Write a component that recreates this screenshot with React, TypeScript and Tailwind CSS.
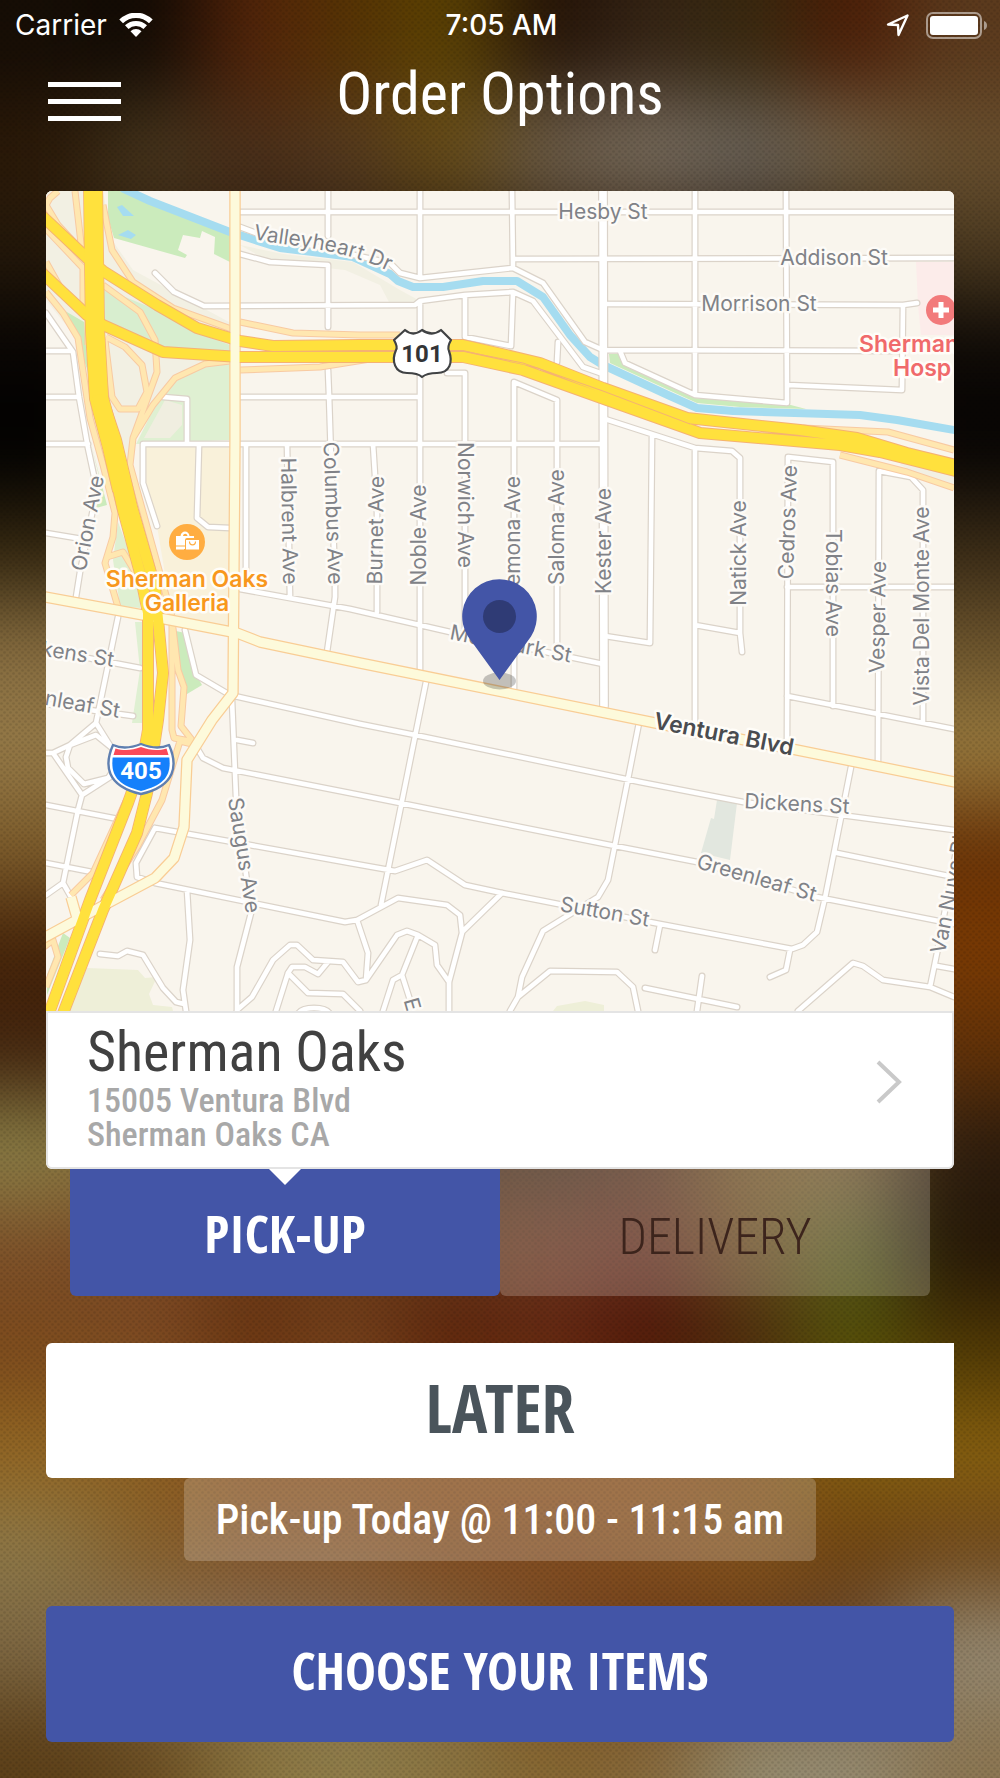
import React, { useState } from 'react';

const NARROW = "font-['Roboto_Condensed','DejaVu_Sans_Condensed',sans-serif]";
const NARROW_CAPS = "font-['Open_Sans_Condensed','Roboto_Condensed',sans-serif]";

// 10 x 18 colour cells of the blurred photo, top to bottom
const PHOTO: string[][] = [
  ['#160d05', '#100903', '#54240a', '#553304', '#5c4303', '#231207', '#352415', '#38290f', '#4c1d06', '#5b3a1d'],
  ['#2c1a08', '#4b3a20', '#4a2f1a', '#573c22', '#6b5018', '#72634f', '#7f7364', '#6c665e', '#766549', '#69502f'],
  ['#24180a', '#302010', '#302010', '#302010', '#302010', '#302010', '#302010', '#302010', '#302010', '#4c3a20'],
  ['#080503', '#100a06', '#201409', '#201409', '#201409', '#201409', '#201409', '#201409', '#100a06', '#0c0805'],
  ['#000000', '#100a06', '#201409', '#201409', '#201409', '#201409', '#201409', '#201409', '#100a06', '#060403'],
  ['#33260f', '#33260f', '#201409', '#201409', '#201409', '#201409', '#201409', '#201409', '#33260f', '#3a2b16'],
  ['#876d40', '#876d40', '#302010', '#302010', '#302010', '#302010', '#302010', '#302010', '#6e562e', '#6e562e'],
  ['#957a48', '#957a48', '#302010', '#302010', '#302010', '#302010', '#302010', '#302010', '#987a3e', '#987a3e'],
  ['#7c5b2a', '#7c5b2a', '#302010', '#302010', '#302010', '#302010', '#302010', '#302010', '#683206', '#683206'],
  ['#452308', '#452308', '#302010', '#302010', '#302010', '#302010', '#302010', '#302010', '#763603', '#7a3a03'],
  ['#42240e', '#42240e', '#302010', '#302010', '#302010', '#302010', '#302010', '#302010', '#5c3a14', '#623208'],
  ['#8c8148', '#8a7038', '#6a4020', '#6a4020', '#4a2c18', '#46301c', '#583822', '#7a5c2c', '#7c5e38', '#2c1c0e'],
  ['#7c4f28', '#7c4a26', '#6c3c1a', '#6c3c1a', '#65381c', '#6c3820', '#662e20', '#6c4c20', '#595c20', '#241606'],
  ['#7c4a1c', '#7d4a22', '#67320f', '#74411c', '#5a2108', '#62240f', '#4a1203', '#46280a', '#525104', '#503904'],
  ['#926622', '#8e6020', '#8c521c', '#8c521c', '#8c521c', '#8c521c', '#8c521c', '#825018', '#846011', '#87600f'],
  ['#8d7848', '#87602c', '#86592e', '#86592e', '#824e22', '#824c20', '#83501f', '#85551e', '#6f4310', '#71491c'],
  ['#7d6743', '#88745a', '#84705a', '#84684e', '#80603e', '#764a26', '#6c3a18', '#683c18', '#644834', '#958a74'],
  ['#5c3f18', '#6a4c20', '#8a743e', '#907f4c', '#8a7440', '#866630', '#86683a', '#958b6e', '#968c72', '#8c7652'],
];

const MINOR_ROADS = [
  'M240 212H954', 'M328 191V236', 'M240 254L270 262L328 265V327',
  'M240 227L256 233L390 263L400 273L420 278L513 268L543 283L585 342L603 350',
  'M155 273L174 292L204 306L415 305L420 301L465 295L513 292L533 301L583 367L603 374',
  'M46 351H72', 'M46 313L73 352L79 397L88 448L97 490L80 572L76 597', 'M46 397H79', 'M46 444H88',
  'M163 397L187 399V444', 'M240 397H420', 'M143 444H603', 'M157 526L143 483V444',
  'M328 370L329 395L335 583V597L327 652', 'M199 444L197 518L208 527L230 528', 'M246 444V590',
  'M240 589L350 609L450 632L603 664', 'M287 444L290 597', 'M373 444L377 507V612',
  'M420 191V278', 'M420 301V672', 'M447 373H465V638', 'M465 297V337L511 346L513 292',
  'M512 191L513 268', 'M513 259L954 258', 'M603 304L903 305L917 303', 'M903 305L902 390L788 385',
  'M603 350L902 351', 'M558 342L557 362', 'M514 690V382L557 400V650', 'M605 419L695 448L732 451L740 458V633L742 652',
  'M652 436L650 643L605 636', 'M695 191V395', 'M786 191L787 403L695 395L625 363L620 351', 'M695 448V735',
  'M695 625L740 633', 'M787 745L788 457L833 462V706', 'M787 587H954', 'M787 696L954 729',
  'M878 762L879 471L911 477L923 490V722',
  'M185 630L196 675L230 695L360 724L415 735L640 782L743 802L954 830',
  'M232 700L236 797L251 913L237 967V1011', 'M237 740L253 743', 'M197 748L203 758L223 768L360 795L400 803L615 846L697 862L817 897L954 924',
  'M155 828L350 863L395 871L427 860L465 885L502 893L660 924L792 949L803 945L817 932L825 898L851 767',
  'M155 828L136 863L137 877L155 883L345 922L357 920L398 898L447 905L460 915L462 933L449 982V1011',
  'M357 920L368 953L366 980L358 982L343 962L313 960L297 945H290L273 960L252 997L237 1010',
  'M366 980L397 935L407 931L418 935L435 945L437 965L449 982', 'M418 935L402 975L410 1000', 'M402 975L393 980L383 1011',
  'M328 962L318 974L305 967H292L288 973L276 1011', 'M288 973L308 993L343 994L360 1011', 'M298 1014C302 1006 326 1006 330 1014',
  'M426 682L381 905', 'M502 893L462 932', 'M639 723L628 779L608 880L598 897L543 931L522 977L518 997L510 1011',
  'M518 997L550 971L617 972L633 987L638 1011', 'M660 925L655 950', 'M645 988L737 1007', 'M702 976L697 1011',
  'M790 950L786 970L770 977', 'M798 1011L853 963L863 966L883 980L930 987L954 997', 'M960 830L937 953L930 987',
  'M937 966L954 969', 'M837 853L954 877', 'M187 890L190 940L183 990L186 1011',
  'M100 954L118 956L127 951L143 955L163 988L176 1002L184 1004', 'M46 805L118 819', 'M46 863L92 872',
  'M110 777L82 795L78 810L63 883L46 895', 'M63 883L71 897', 'M46 753H53L70 745L96 723L118 617', 'M96 723L111 747',
  'M53 753L82 795', 'M46 650L140 668', 'M46 704L133 716', 'M46 533L82 539',
  'M66 757L70 745L96 735L112 748L118 764L108 778L84 784L68 768Z',
];

const RAMPS = [
  'M103 205L112 250L133 282L173 308L237 331', 'M240 322L293 333L360 335H400', 'M75 191L82 252', 'M46 205L50 198L58 191',
  'M46 205L58 225L84 253', 'M46 229L83 268V312', 'M46 262L60 287L88 318V345', 'M46 292L63 313L78 338L90 418L103 465L115 513L113 537L105 563L118 607',
  'M103 285L140 312L155 340L157 372L133 438L130 465L172 617V730L174 738L195 742', 'M106 337L125 347L142 365L147 392L138 409H120L112 397L105 340',
  'M133 438L153 405L175 378L205 364L230 361', 'M240 370L320 367L370 359', 'M107 557L123 552L140 580',
  'M172 620L178 670L184 687L181 726L192 740', 'M192 744L180 741L162 800L137 847L103 900', 'M128 797L93 873L71 895',
  'M44 947L53 940L58 957L46 987', 'M803 428L888 432L954 450', 'M840 455L907 472L954 488',
];

const FREEWAYS = [
  'M40 214L87 258L103 271L157 305L197 328L240 341L273 346L360 345H463L540 363L603 388L687 418L800 430L857 438L907 453L960 466',
  'M40 271L87 315L103 325L163 352L240 357H463L523 370L607 400L700 433L840 445L880 452L960 472',
  'M97 395L107 440L123 510L140 573L148 613V730L142 763L128 803L90 900L48 1016',
  'M101 395L116 440L132 507L155 587L163 673L158 720L147 793L137 833L103 910L62 1016',
];
const FREEWAY_TRUNK = 'M93 185L95 330L99 398L112 447L122 490';

const VENTURA = 'M40 596L170 620L237 633L260 642L360 663L670 726L787 748L960 783';
const SEPULVEDA = 'M235 185V440L233 693L212 720L187 760L184 827L174 858L155 878L95 910L40 940M71 897L77 918';
const RIVER = 'M122 188L150 201L230 232L280 248L353 257L390 274L398 281L413 287H443L483 281L517 281L543 297L570 335L590 357L603 365L670 396L697 408L733 411L860 415L897 420L960 431';

interface MapLabel {
  text: string;
  x: number;
  y: number;
  angle?: number;
  anchor?: 'start' | 'middle' | 'end';
}

const STREETS: MapLabel[] = [
  { text: 'Hesby St', x: 603, y: 211 },
  { text: 'Addison St', x: 834, y: 257 },
  { text: 'Morrison St', x: 759, y: 303 },
  { text: 'Orion Ave', x: 87, y: 523, angle: -79 },
  { text: 'Halbrent Ave', x: 290, y: 521, angle: 89 },
  { text: 'Columbus Ave', x: 334, y: 513, angle: 88 },
  { text: 'Burnet Ave', x: 375, y: 530, angle: -89 },
  { text: 'Noble Ave', x: 418, y: 535, angle: -90 },
  { text: 'Norwich Ave', x: 466, y: 505, angle: 90 },
  { text: 'Lemona Ave', x: 512, y: 537, angle: -90 },
  { text: 'Saloma Ave', x: 556, y: 527, angle: -90 },
  { text: 'Kester Ave', x: 603, y: 541, angle: -90 },
  { text: 'Natick Ave', x: 738, y: 553, angle: -90 },
  { text: 'Cedros Ave', x: 787, y: 522, angle: -88 },
  { text: 'Tobias Ave', x: 834, y: 583, angle: 90 },
  { text: 'Vesper Ave', x: 877, y: 617, angle: -89 },
  { text: 'Vista Del Monte Ave', x: 921, y: 606, angle: -90 },
  { text: 'Dickens St', x: 114, y: 659, angle: 9, anchor: 'end' },
  { text: 'Greenleaf St', x: 120, y: 710, angle: 10, anchor: 'end' },
  { text: 'Moorpark St', x: 511, y: 643, angle: 11 },
  { text: 'Dickens St', x: 797, y: 803, angle: 3 },
  { text: 'Greenleaf St', x: 757, y: 877, angle: 16 },
  { text: 'Sutton St', x: 605, y: 911, angle: 10 },
  { text: 'Saugus Ave', x: 245, y: 855, angle: 81 },
  { text: 'Van Nuys Blvd', x: 937, y: 953, angle: -79, anchor: 'start' },
  { text: 'E', x: 413, y: 1004, angle: 74 },
];

const StreetMap: React.FC = () => (
  <svg
    viewBox="46 191 908 820"
    className="block h-auto w-full bg-[#f9f5ed] font-['Inter','Liberation_Sans',sans-serif]"
    role="img"
    aria-label="Map of Sherman Oaks"
  >
    {/* land areas */}
    <path fill="#f2f0e3" d="M46 191H103L112 240L133 270L240 328V362L175 385L133 440L128 460H100L78 340L46 300Z" />
    <path fill="#f2f0e3" d="M240 245L283 254L353 262L400 290L420 301L390 304L380 285L345 270L270 262ZM910 447L954 460V490L900 465Z" />
    <path fill="#cbebbc" d="M108 191H120L230 234V262L214 254L215 237L202 231L200 238L183 235L178 250L187 255L185 258L114 238L108 218Z" />
    <path fill="#a5dcf0" d="M117 207L122 205L134 216L123 216ZM118 235L128 230L136 235L131 239Z" />
    <path fill="#d8eecf" d="M103 288L157 310L197 333L230 345V356L163 350L103 322Z" />
    <path fill="#dff0d2" d="M175 382L205 366L230 362V440L136 444L153 410Z" />
    <path fill="#f0eee0" d="M165 400L182 405V425L170 438L144 438Z" />
    <path fill="#cbebbc" d="M60 308L84 322L88 372L78 342ZM90 440L107 505L96 508L100 480Z" />
    <path fill="#dff0d2" d="M118 522L140 580V608L120 606L113 560ZM135 622H144V723H132L140 670Z" />
    <path fill="#cbebbc" d="M176 631L185 633L195 673L202 685L187 694L178 668ZM63 933L70 938L47 995V975Z" />
    <path fill="#f9f1da" d="M145 446H229V628L172 616L157 526L145 483Z" />
    <path fill="#eeefd8" d="M87 968L138 970L145 978L157 977L149 994L153 1005L172 1007L173 1011H68ZM553 1011L557 1006L585 1001L604 1005V1011Z" />
    <path fill="#e2e7df" d="M717 800L737 803L730 860L701 853L711 818L714 819Z" />
    <path fill="#fcecea" d="M916 262H954V335H921L918 305Z" />

    <path d={RIVER} fill="none" stroke="#a5dcf0" strokeWidth="8" strokeLinejoin="round" />
    <path fill="#cbebbc" d="M609 354H618L625 366L695 398L787 404L806 409L740 407L697 403L610 363Z" />

    {/* minor roads, casing under fill */}
    <g fill="none" strokeLinecap="round" strokeLinejoin="round">
      <path d={MINOR_ROADS.join('')} stroke="#dbd3c9" strokeWidth="7" />
      <path d="M603 185L604 706" stroke="#dbd3c9" strokeWidth="10" />
      <path d={MINOR_ROADS.join('')} stroke="#ffffff" strokeWidth="4.6" />
      <path d="M603 185L604 706" stroke="#ffffff" strokeWidth="7.6" />
    </g>

    <g fill="none" strokeLinejoin="round">
      <path d={RAMPS.join('')} stroke="#f8caa2" strokeWidth="7" />
      <path d={RAMPS.join('')} stroke="#ffe7b0" strokeWidth="5" />
      <path d={VENTURA + SEPULVEDA} stroke="#f9cd95" strokeWidth="11.5" />
      <path d={FREEWAYS.join('')} stroke="#f5b272" strokeWidth="12" />
      <path d={FREEWAY_TRUNK} stroke="#f5b272" strokeWidth="20" />
      <path d={FREEWAYS.join('')} stroke="#ffe13d" strokeWidth="10" />
      <path d={FREEWAY_TRUNK} stroke="#ffe13d" strokeWidth="18.4" />
      <path d={VENTURA} stroke="#fdfadb" strokeWidth="9" />
      <path d={SEPULVEDA} stroke="#fdfadb" strokeWidth="9" />
      <path d={FREEWAYS.slice(2).join('')} stroke="#ffe13d" strokeWidth="10" />
      <path d="M463 351L523 363L603 391L690 424" stroke="#f5b272" strokeWidth="1" />
    </g>

    {/* street names */}
    <g fill="#808287" stroke="#fdfbf7" strokeWidth="5" strokeLinejoin="round" className="text-[21px] [paint-order:stroke]">
      {STREETS.map((s) => (
        <text
          key={`${s.text}-${s.x}`}
          transform={`translate(${s.x} ${s.y}) rotate(${s.angle ?? 0})`}
          textAnchor={s.anchor ?? 'middle'}
          y="8"
        >
          {s.text}
        </text>
      ))}
      <path id="valleyheart" d="M253 239C290 247 345 247 398 276" fill="none" stroke="none" />
      <text>
        <textPath href="#valleyheart">Valleyheart Dr</textPath>
      </text>
    </g>
    <g stroke="#fffdf8" strokeWidth="5" strokeLinejoin="round" className="text-[23px] font-semibold [paint-order:stroke]">
      <text transform="translate(724 734) rotate(11)" textAnchor="middle" y="8" fill="#4a4c50">Ventura Blvd</text>
      <text x="187" y="587" textAnchor="middle" fill="#f8981d">Sherman Oaks</text>
      <text x="187" y="611" textAnchor="middle" fill="#f8981d">Galleria</text>
      <text x="859" y="352" fill="#f06a6b">Sherman</text>
      <text x="893" y="376" fill="#f06a6b">Hosp</text>
    </g>

    {/* shopping bags */}
    <circle cx="187" cy="542" r="18" fill="#ffad41" />
    <path fill="#fff" d="M176 536H180.500C181 530 189 530 189.500 536H194V538H187Q185 538 185 540V549H176ZM183 536H187.500C187 533 183.500 533 183 536Z" />
    <path fill="#fff" d="M176 546.500H184V549.500H176ZM186 540H199V549.500H186Z" />
    <path d="M176 546H185M189.500 541.500C189.500 546 195.500 546 195.500 541.500" fill="none" stroke="#ffad41" strokeWidth="1.200" />

    {/* hospital */}
    <circle cx="941" cy="310" r="15" fill="#f27a7b" />
    <path d="M933 310H949M941 302V318" stroke="#fff" strokeWidth="5" />

    {/* US 101 */}
    <path
      d="M405 330Q413 337 422 330Q432 337 441 330L451 340Q447 347 449 351C453 362 450 373 437 373Q427 373 422 377Q418 373 407 373C395 373 391 361 396 350Q398 347 394 340Z"
      fill="#fff"
      stroke="#404244"
      strokeWidth="2.200"
      strokeLinejoin="round"
    />
    <text x="422" y="362" textAnchor="middle" fill="#333436" className="font-['Roboto','Liberation_Sans',sans-serif] text-[24px] font-bold">101</text>

    {/* Interstate 405 */}
    <path
      d="M113 745C122 749 131 748 141 744C151 748 160 749 169 745C178 765 176 786 141 794C106 786 104 765 113 745Z"
      fill="#fff"
      stroke="#5f7fb0"
      strokeWidth="2.400"
      strokeLinejoin="round"
    />
    <path d="M115.500 748.500C124 751 132 750.500 141 747C150 750.500 158 751 166.500 748.500L168.500 755H113.500Z" fill="#fb4a58" />
    <path d="M112.700 757.500H169.300C171.500 776 164 785 141 791C118 785 110.500 776 112.700 757.500Z" fill="#1580fb" />
    <text x="141" y="779" textAnchor="middle" fill="#fff" className="font-['Roboto','Liberation_Sans',sans-serif] text-[24px] font-bold">405</text>

    {/* store pin */}
    <ellipse cx="499.500" cy="681" rx="16.500" ry="8.500" fill="#000" fillOpacity="0.22" />
    <path d="M499.500 680L468 636.500A37.300 37.300 0 1 1 531 636.500Z" fill="#4355a7" />
    <circle cx="499.500" cy="616.500" r="16.500" fill="#2f3b75" />
  </svg>
);

const PhotoBackdrop: React.FC = () => (
  <svg className="absolute inset-0 -z-10 h-full w-full" viewBox="0 0 1000 1778" preserveAspectRatio="none" aria-hidden="true">
    <defs>
      <filter id="soften" x="-20%" y="-20%" width="140%" height="140%" colorInterpolationFilters="sRGB">
        <feGaussianBlur stdDeviation="42" />
      </filter>
      <pattern id="weave" width="6" height="6" patternUnits="userSpaceOnUse">
        <circle cx="1.500" cy="1.500" r="1.300" fill="#000" fillOpacity="0.1" />
        <circle cx="4.500" cy="4.500" r="1.300" fill="#000" fillOpacity="0.1" />
      </pattern>
    </defs>
    <g filter="url(#soften)">
      {PHOTO.map((row, r) =>
        row.map((color, c) => (
          <rect
            key={`${r}-${c}`}
            x={c === 0 ? -150 : c * 100}
            y={r === 0 ? -150 : r * 100}
            width={c === 0 || c === 9 ? 251 : 101}
            height={r === 0 || r === 17 ? 251 : 101}
            fill={color}
          />
        ))
      )}
    </g>
    <rect width="1000" height="1778" fill="url(#weave)" />
  </svg>
);

const StatusBar: React.FC = () => (
  <div className="grid h-[50px] grid-cols-3 items-center pr-3 pl-[15px] font-['Inter','Liberation_Sans',sans-serif] text-[28px] leading-8 text-white">
    <div className="flex items-center gap-3">
      <span>Carrier</span>
      <svg className="h-6 w-[34px]" viewBox="0 0 34 24" fill="#fff" aria-hidden="true">
        <path d="M17 24L11.500 18.200A8 8 0 0 1 22.500 18.200Z" />
        <path d="M9.500 16L6 12.300A16 16 0 0 1 28 12.300L24.500 16A11 11 0 0 0 9.500 16Z" />
        <path d="M4 10.200L0.300 6.400A24 24 0 0 1 33.700 6.400L30 10.200A19 19 0 0 0 4 10.200Z" />
      </svg>
    </div>
    <span className="text-center font-medium">7:05 AM</span>
    <div className="flex items-center justify-end gap-4">
      <svg className="h-[23px] w-6" viewBox="0 0 24 23" aria-hidden="true">
        <path d="M2 10.500L21.500 1.500L12.500 21L12 11Z" fill="none" stroke="#fff" strokeWidth="2.400" strokeLinejoin="round" />
      </svg>
      <svg className="h-[27px] w-[62px]" viewBox="0 0 62 27" aria-hidden="true">
        <rect x="1" y="1" width="54" height="25" rx="6" fill="none" stroke="#fff" strokeOpacity="0.5" strokeWidth="2" />
        <rect x="4" y="4" width="48" height="19" rx="3" fill="#fff" />
        <path d="M58 9C62 10 62 17 58 18Z" fill="#fff" fillOpacity="0.5" />
      </svg>
    </div>
  </div>
);

type OrderMode = 'pickup' | 'delivery';

export default function App() {
  const [mode, setMode] = useState<OrderMode>('pickup');

  const tabStyle = (active: boolean) =>
    active
      ? `bg-[#4355a7] text-[52px] font-bold text-white ${NARROW_CAPS}`
      : 'bg-white/20 pt-2 text-[50px] font-light text-[#3c241c]';

  return (
    <div className={`relative isolate min-h-screen overflow-hidden bg-[#3a2412] pb-9 ${NARROW}`}>
      <PhotoBackdrop />
      <StatusBar />

      <header className="grid h-[141px] grid-cols-[1fr_auto_1fr] items-start px-12 pt-2">
        <button type="button" aria-label="Menu" className="mt-6 flex w-[73px] flex-col gap-3">
          <span className="h-[5px] w-full bg-white" />
          <span className="h-[5px] w-full bg-white" />
          <span className="h-[5px] w-full bg-white" />
        </button>
        <h1 className="text-[60px] leading-[72px] text-white">Order Options</h1>
      </header>

      <main className="px-[46px]">
        <section className="overflow-hidden rounded-md bg-white">
          <StreetMap />
          <a href="#store" className="flex items-center justify-between rounded-b-md border-2 border-[#e4e4e4] pt-2 pb-4 pr-[50px] pl-[39px]">
            <div>
              <h2 className="text-[56px] leading-[62px] text-[#414141]">Sherman Oaks</h2>
              <p className="text-[34px] leading-[34px] font-medium text-[#a8a8a8]">15005 Ventura Blvd</p>
              <p className="text-[34px] leading-[34px] font-medium text-[#a8a8a8]">Sherman Oaks CA</p>
            </div>
            <svg className="mb-2 h-11 w-[26px]" viewBox="0 0 26 44" aria-hidden="true">
              <path d="M2 2L23 22L2 42" fill="none" stroke="#c9c9c9" strokeWidth="4" />
            </svg>
          </a>
        </section>

        <div className="mx-6 grid grid-cols-2">
          <button
            type="button"
            aria-pressed={mode === 'pickup'}
            onClick={() => setMode('pickup')}
            className={`relative h-[127px] rounded-b-md leading-[60px] ${tabStyle(mode === 'pickup')}`}
          >
            {mode === 'pickup' && <Notch />}
            PICK-UP
          </button>
          <button
            type="button"
            aria-pressed={mode === 'delivery'}
            onClick={() => setMode('delivery')}
            className={`relative h-[127px] rounded-b-md leading-[60px] ${tabStyle(mode === 'delivery')}`}
          >
            {mode === 'delivery' && <Notch />}
            DELIVERY
          </button>
        </div>

        <button type="button" className={`mt-[47px] h-[135px] w-full rounded-l-md bg-white pb-2 text-[66px] leading-[72px] font-bold text-[#4a545b] ${NARROW_CAPS}`}>
          LATER
        </button>
        <p className="mx-auto flex h-[83px] w-fit items-center rounded-md bg-white/20 px-8 text-[42px] leading-[48px] font-medium text-white">
          Pick-up Today @ 11:00 - 11:15 am
        </p>
        <button type="button" className={`mt-[45px] h-[136px] w-full rounded-md bg-[#4355a7] pb-2 text-[52px] leading-[60px] font-bold text-white ${NARROW_CAPS}`}>
          CHOOSE YOUR ITEMS
        </button>
      </main>
    </div>
  );
}

function Notch() {
  return (
    <svg className="absolute top-0 left-1/2 h-4 w-8 -translate-x-1/2" viewBox="0 0 32 16" aria-hidden="true">
      <path d="M0 0H32L16 16Z" fill="#fff" />
    </svg>
  );
}
